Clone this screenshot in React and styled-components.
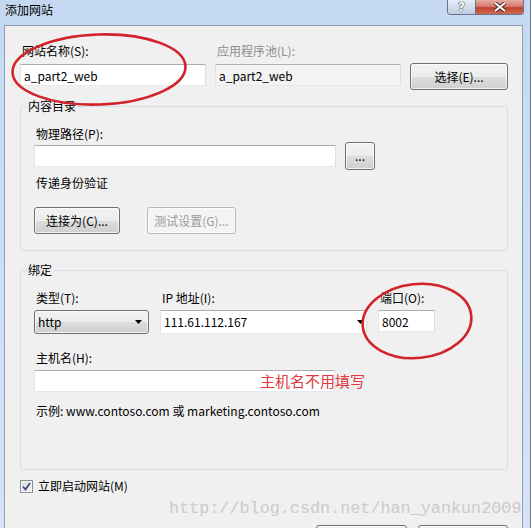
import styled, { createGlobalStyle } from "styled-components"

const GlobalStyle = createGlobalStyle`
  html, body {
    margin: 0;
    padding: 0;
    background: #ffffff;
  }
  body {
    font-family: "Noto Sans CJK SC", "Noto Sans", sans-serif;
    font-size: 12px;
  }
`

const Arrow = () => (
  <svg width="7" height="4" viewBox="0 0 7 4">
    <path d="M0 0 H7 L3.5 4 Z" fill="#000" />
  </svg>
)

const Check = () => (
  <svg width="9" height="9" viewBox="0 0 9 9">
    <path d="M1 4.5 L3.5 7.5 L8 1" fill="none" stroke="#3b4f8a" strokeWidth="1.8" />
  </svg>
)

const App = () => {
  return (
    <>
      <GlobalStyle />
      <Window>
        <TitleBar>
          <Title>添加网站</Title>
          <Controls>
            <HelpBtn>?</HelpBtn>
            <CloseBtn>
              <svg width="14" height="10" viewBox="0 0 14 10">
                <path d="M2 1 L12 9 M12 1 L2 9" stroke="#4a2a28" strokeWidth="4" />
                <path d="M2 1 L12 9 M12 1 L2 9" stroke="#fff" strokeWidth="2" />
              </svg>
            </CloseBtn>
          </Controls>
        </TitleBar>

        <Client>
          <TopGrid>
            <Label>网站名称(S):</Label>
            <Label $disabled>应用程序池(L):</Label>
            <span />
            <TextBox defaultValue="a_part2_web" />
            <TextBox defaultValue="a_part2_web" $readonly readOnly />
            <Button $w={98} $h={27} style={{ marginTop: -1 }}>选择(E)...</Button>
          </TopGrid>

          <Group>
            <Legend>内容目录</Legend>
            <GroupBody $bottom={16}>
              <Label>物理路径(P):</Label>
              <Row $gap={9}>
                <TextBox $w={302} />
                <Button $w={30} $h={28}>...</Button>
              </Row>
              <Label $top={5}>传递身份验证</Label>
              <Row $gap={27} $top={16}>
                <Button $w={86} $h={27}>连接为(C)...</Button>
                <Button $w={89} $h={27} $disabled>测试设置(G)...</Button>
              </Row>
            </GroupBody>
          </Group>

          <Group $top={11}>
            <Legend>绑定</Legend>
            <GroupBody $bottom={50}>
              <BindGrid>
                <Label>类型(T):</Label>
                <Label>IP 地址(I):</Label>
                <Label>端口(O):</Label>
                <DropList>
                  <span>http</span>
                  <Arrow />
                </DropList>
                <Combo>
                  <span>111.61.112.167</span>
                  <Arrow />
                </Combo>
                <TextBox defaultValue="8002" />
              </BindGrid>
              <Label $top={16}>主机名(H):</Label>
              <TextBox $w={301} style={{ marginTop: 4 }} />
              <Label $top={11}>示例: www.contoso.com 或 marketing.contoso.com</Label>
            </GroupBody>
          </Group>

          <CheckRow>
            <CheckBox><Check /></CheckBox>
            <span>立即启动网站(M)</span>
          </CheckRow>

          {/* OK / Cancel: only their top edges are inside the window */}
          <Footer>
            <Button $w={91} $h={27} aria-label="确定" />
            <Button $w={90} $h={27} aria-label="取消" />
          </Footer>
        </Client>

        <Note>主机名不用填写</Note>
        <Watermark>http://blog.csdn.net/han_yankun2009</Watermark>
        <Marks width="531" height="528" viewBox="0 0 531 528">
          <ellipse cx="99" cy="69.5" rx="86.5" ry="35" transform="rotate(-2 99 69.5)" />
          <ellipse cx="417" cy="321" rx="54.5" ry="37" transform="rotate(-6 417 321)" />
        </Marks>
      </Window>
    </>
  )
}

export default App

const Window = styled.div`
  position: relative;
  width: 531px;
  height: 528px;
  box-sizing: border-box;
  border-right: 1px solid #6b7a8c;
  background: linear-gradient(180deg, #c4d9f1 0%, #d4e4f6 100%);
  display: flex;
  flex-direction: column;
  overflow: hidden;
`
const TitleBar = styled.div`
  height: 25px;
  display: flex;
  align-items: flex-start;
  flex-shrink: 0;
`
const Title = styled.div`
  margin: 2px 0 0 5px;
  line-height: 16px;
  color: #000;
`
const Controls = styled.div`
  margin-left: auto;
  margin-right: 6px;
  display: flex;
  height: 14px;
  border: 1px solid #6a7488;
  border-top: none;
  border-radius: 0 0 4px 4px;
  overflow: hidden;
`
const HelpBtn = styled.div`
  width: 27px;
  height: 14px;
  border-right: 1px solid #6a7488;
  background: linear-gradient(180deg, #e4ecf6 0%, #d3deec 50%, #bccbe0 100%);
  color: #fff;
  font-family: "DejaVu Sans", sans-serif;
  font-weight: bold;
  font-size: 12px;
  line-height: 14px;
  text-align: center;
  text-shadow: 0 0 1px #3b4656, 0 0 1px #3b4656, 0 0 1px #3b4656;
`
const CloseBtn = styled.div`
  width: 47px;
  height: 14px;
  background: linear-gradient(180deg, #e6aba2 0%, #d57b6d 45%, #c1402f 55%, #d06a50 100%);
  display: flex;
  align-items: center;
  justify-content: center;
`
const Client = styled.div`
  flex: 1;
  margin: 0 7px 0 4px;
  border: 1px solid #8d9fb3;
  border-bottom: none;
  background: #f0f0f0;
  padding: 17px 14px 0 15px;
  display: flex;
  flex-direction: column;
  align-items: stretch;
`
const TopGrid = styled.div`
  display: grid;
  grid-template-columns: 186px 186px 1fr;
  column-gap: 9px;
  row-gap: 5px;
  align-items: start;
`
const Label = styled.div`
  line-height: 16px;
  padding-left: 2px;
  color: ${p => (p.$disabled ? "#8d8d8d" : "#000")};
  margin-top: ${p => p.$top || 0}px;
  white-space: nowrap;
`
const TextBox = styled.input`
  box-sizing: border-box;
  width: ${p => (p.$w ? `${p.$w}px` : "100%")};
  height: 22px;
  margin: 0;
  padding: 0 3px;
  border: 1px solid;
  border-color: #abadb3 #dbdfe6 #e3e9ef #e2e3ea;
  background: ${p => (p.$readonly ? "#f3f3f3" : "#fff")};
  font-family: "Noto Sans CJK SC", "Noto Sans", sans-serif;
  font-size: 12px;
  color: #000;
  outline: none;
`
const Button = styled.div`
  box-sizing: border-box;
  width: ${p => p.$w}px;
  height: ${p => p.$h}px;
  flex-shrink: 0;
  border: 1px solid ${p => (p.$disabled ? "#b5b9bd" : "#707070")};
  border-radius: 3px;
  background: ${p =>
    p.$disabled
      ? "#f4f4f4"
      : "linear-gradient(180deg, #f2f2f2 0%, #ebebeb 50%, #dddddd 51%, #cfcfcf 100%)"};
  box-shadow: inset 0 0 0 1px rgba(255, 255, 255, 0.7);
  color: ${p => (p.$disabled ? "#9a9a9a" : "#000")};
  display: flex;
  align-items: center;
  justify-content: center;
  line-height: 16px;
`
const Group = styled.fieldset`
  margin: ${p => p.$top || 8}px 0 0;
  padding: 0;
  min-width: 0;
  border: 1px solid #d5dfe5;
  border-radius: 3px;
`
const Legend = styled.legend`
  margin-left: 6px;
  padding: 0 1px;
  line-height: 16px;
  color: #000;
`
const GroupBody = styled.div`
  padding: 12px 0 ${p => p.$bottom}px 13px;
  display: flex;
  flex-direction: column;
  align-items: flex-start;
`
const Row = styled.div`
  display: flex;
  align-items: center;
  gap: ${p => p.$gap}px;
  margin-top: ${p => p.$top || 0}px;
`
const BindGrid = styled.div`
  display: grid;
  grid-template-columns: 115px 207px 57px;
  column-gap: 11px;
  row-gap: 4px;
  align-items: start;
`
const DropList = styled.div`
  box-sizing: border-box;
  height: 24px;
  border: 1px solid #707070;
  border-radius: 3px;
  background: linear-gradient(180deg, #f2f2f2 0%, #ebebeb 50%, #dddddd 51%, #cfcfcf 100%);
  box-shadow: inset 0 0 0 1px rgba(255, 255, 255, 0.7);
  display: flex;
  align-items: center;
  justify-content: space-between;
  padding: 0 6px 0 3px;
  line-height: 16px;
`
const Combo = styled.div`
  box-sizing: border-box;
  height: 24px;
  border: 1px solid;
  border-color: #abadb3 #dbdfe6 #e3e9ef #e2e3ea;
  background: #fff;
  display: flex;
  align-items: center;
  justify-content: space-between;
  padding: 0 2px 0 3px;
  line-height: 16px;
`
const CheckRow = styled.label`
  margin-top: 8px;
  display: flex;
  align-items: center;
  gap: 5px;
  line-height: 16px;
`
const CheckBox = styled.span`
  box-sizing: border-box;
  width: 13px;
  height: 13px;
  border: 1px solid #8e8f8f;
  background: linear-gradient(135deg, #dcdcdc 0%, #f6f6f6 100%);
  box-shadow: inset 0 0 0 1px #f4f4f4;
  display: flex;
  align-items: center;
  justify-content: center;
`
const Footer = styled.div`
  margin-top: 31px;
  display: flex;
  justify-content: flex-end;
  gap: 11px;
`
const Note = styled.div`
  position: absolute;
  left: 260px;
  top: 372px;
  font-size: 15px;
  line-height: 18px;
  color: #e0383c;
  white-space: nowrap;
`
const Watermark = styled.div`
  position: absolute;
  left: 169px;
  top: 499px;
  font-family: "Liberation Mono", monospace;
  font-size: 16.8px;
  line-height: 20px;
  color: #cbcbcb;
  white-space: nowrap;
  pointer-events: none;
`
const Marks = styled.svg`
  position: absolute;
  left: 0;
  top: 0;
  pointer-events: none;
  ellipse {
    fill: none;
    stroke: #d2232a;
    stroke-width: 2.6;
  }
`
